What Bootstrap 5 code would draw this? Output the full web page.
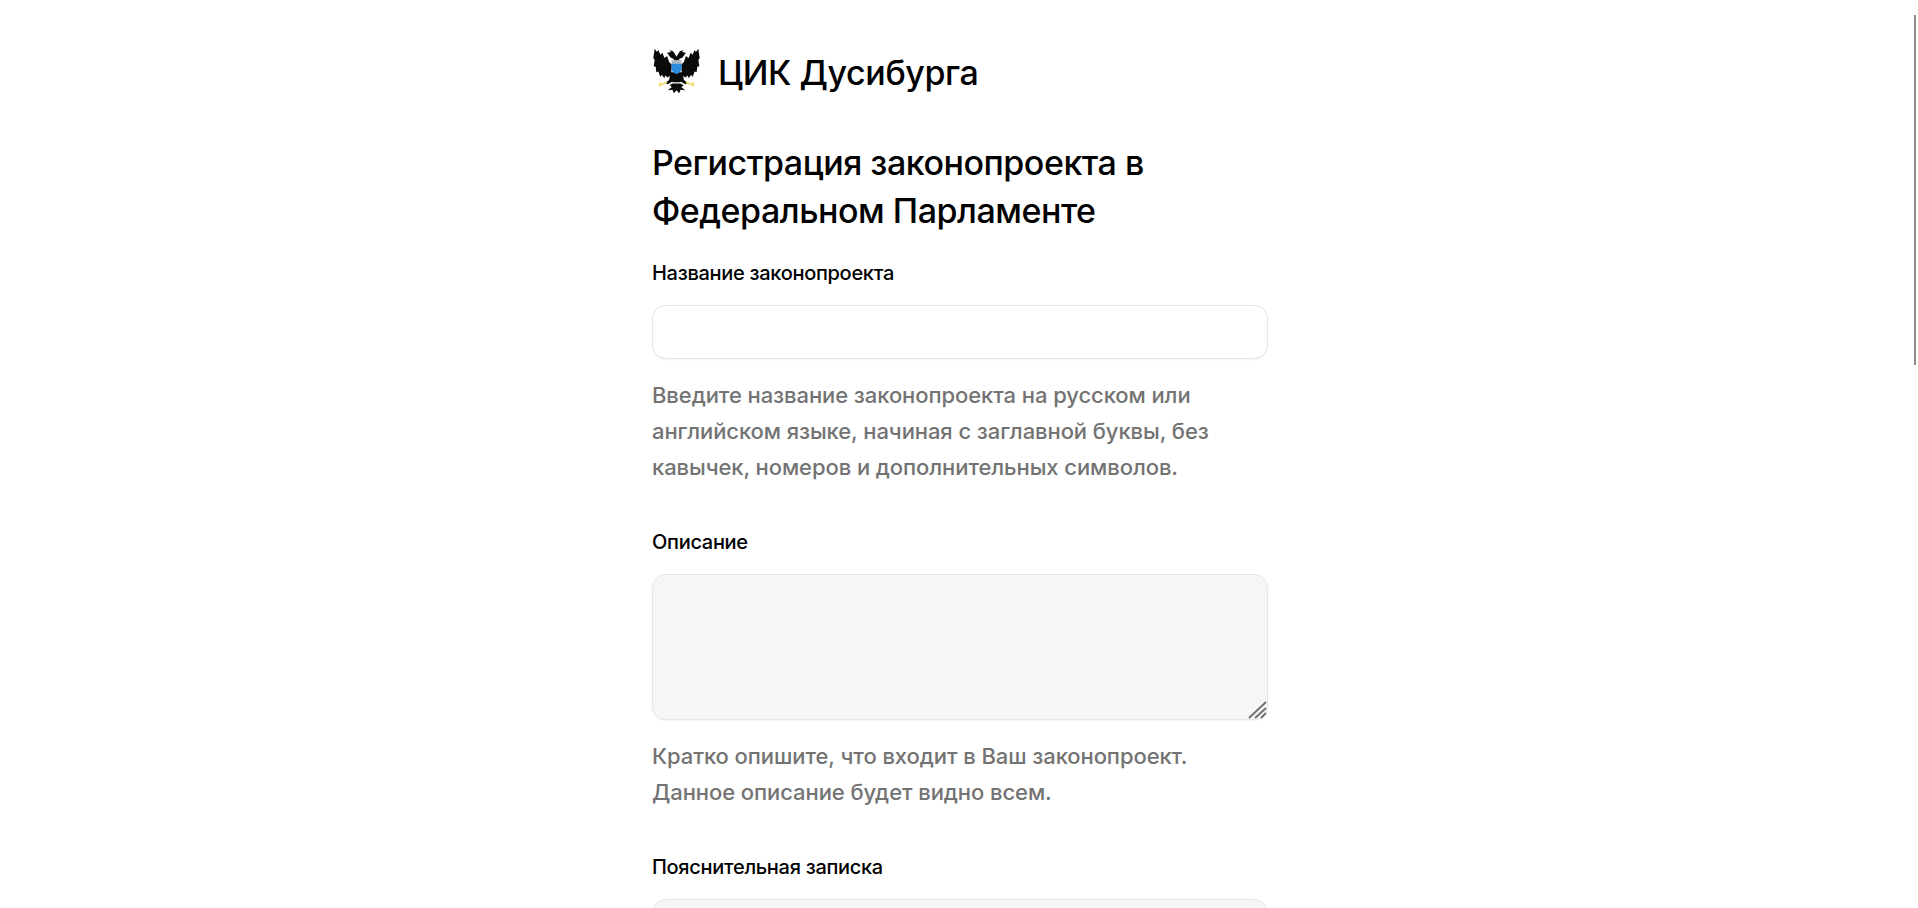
<!DOCTYPE html>
<html lang="ru">
<head>
<meta charset="utf-8">
<title>ЦИК Дусибурга</title>
<link href="https://cdn.jsdelivr.net/npm/bootstrap@5.3.0/dist/css/bootstrap.min.css" rel="stylesheet">
<style>
html,body{height:908px;overflow:hidden;background:#fff}
body{font-family:Inter,"Noto Sans",sans-serif;color:#000;position:relative;padding-left:2px}
.page-col{width:616px;margin:0 auto;padding:48px 0 0}
.brand-row{height:50px;gap:18px;margin-bottom:41px}
.brand-logo{align-self:flex-start;width:47px;height:46px;flex:none;margin-left:1px}
.brand-name{font-size:34px;font-weight:500;line-height:50px;margin:0;letter-spacing:-.4px}
.page-title{font-size:34px;font-weight:500;line-height:48px;margin:0 0 24px;letter-spacing:-.48px}
.field-label{display:block;font-size:20px;font-weight:500;line-height:28px;margin:0 0 18px;letter-spacing:-.3px}
.field-input{height:54px;border:1px solid #e5e5e5;border-radius:14px;background:#fff;box-shadow:0 1px 2px rgba(0,0,0,.05);display:block;width:100%}
.field-area{height:146px;background:#f6f6f6;resize:none}
.field-help{font-size:22px;font-weight:450;line-height:36px;color:#737373;margin:18px 0 0;letter-spacing:-.08px}
.field-block{margin-bottom:43px}
.grip-mark{position:absolute;right:1px;bottom:1px}
.scroll-thumb{position:absolute;top:15px;right:2px;width:2px;height:350px;background:#8c8c8c}
</style>
</head>
<body>
<main class="page-col">
<div class="d-flex brand-row">
<svg class="brand-logo" viewBox="0 0 140 137" aria-hidden="true">
<g fill="#0a0a0a">
<path d="M5 2L12 12 16 6 22 20 28 14 34 30 42 24 48 42 56 50 54 80 44 88 36 82 34 90 26 80 22 86 16 70 10 72 8 56 2 54 5 36 1 30Z"/>
<path d="M135 2L128 12 124 6 118 20 112 14 106 30 98 24 92 42 84 50 86 80 96 88 104 82 106 90 114 80 118 86 124 70 130 72 132 56 138 54 135 36 139 30Z"/>
<path d="M70 42L60 32 52 28 42 14 54 12 48 6 60 10 68 22 70 26 72 22 80 10 92 6 86 12 98 14 88 28 80 32Z"/>
<path d="M52 72H88L92 96 80 102H60L48 96Z"/>
<path d="M52 92L36 104 44 108 58 100ZM88 92L104 104 96 108 82 100Z"/>
<path d="M50 110L58 106H82L92 112 84 116 96 126 82 124 78 135 70 126 62 135 58 124 44 126 56 116Z"/>
</g>
<path fill="#aeb9c3" d="M55 36H85V48H55Z"/>
<path fill="#2d8be0" d="M55 47H85V62C85 70 78 74 70 78 62 74 55 70 55 62Z"/>
<g fill="none" stroke="#ecd95a">
<path stroke-width="5" d="M20 110L42 102M120 110L98 102"/>
<path stroke-width="4" d="M20 102V115M120 102V115"/>
</g>
</svg>
<div class="brand-name">ЦИК Дусибурга</div>
</div>
<h1 class="page-title">Регистрация законопроекта в Федеральном Парламенте</h1>
<div class="field-block">
<label class="field-label" for="f1">Название законопроекта</label>
<input id="f1" class="field-input" type="text">
<p class="field-help">Введите название законопроекта на русском или английском языке, начиная с заглавной буквы, без кавычек, номеров и дополнительных символов.</p>
</div>
<div class="field-block">
<label class="field-label" for="f2">Описание</label>
<div class="position-relative">
<textarea id="f2" class="field-input field-area"></textarea>
<svg class="grip-mark" width="19" height="18" viewBox="0 0 19 18" aria-hidden="true"><path fill="none" stroke="#6e6e6e" stroke-width="1.8" d="M1 17L18 1M7 17L18 7M13 17l5-5"/></svg>
</div>
<p class="field-help">Кратко опишите, что входит в Ваш законопроект. Данное описание будет видно всем.</p>
</div>
<div class="field-block">
<label class="field-label" for="f3">Пояснительная записка</label>
<textarea id="f3" class="field-input field-area"></textarea>
</div>
</main>
<div class="scroll-thumb"></div>
</body>
</html>
